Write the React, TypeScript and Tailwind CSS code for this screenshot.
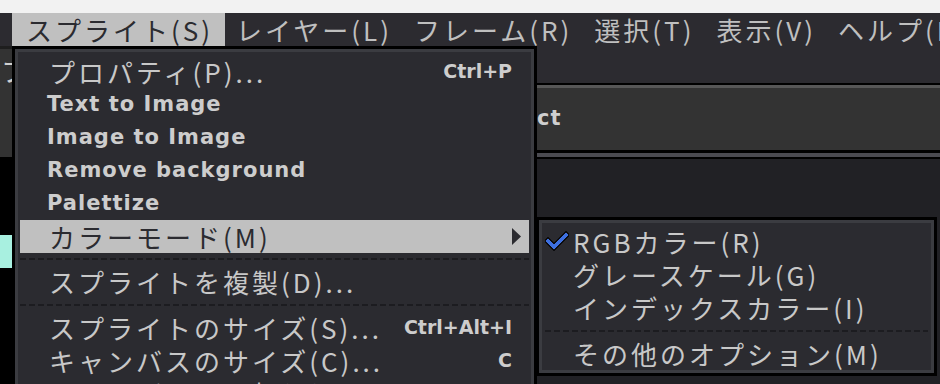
import React from 'react';

const jp = "font-['Noto_Sans_CJK_JP','Noto_Sans',sans-serif] text-[26px] tracking-[3px] leading-none";
const px = "font-['DejaVu_Sans',sans-serif] font-bold text-[21px] tracking-[1px] leading-none";
const dash = 'h-[2px] bg-[repeating-linear-gradient(90deg,#1c1c20_0_6px,transparent_6px_9px)]';

type Item = { label: string; pixel?: boolean; shortcut?: string; active?: boolean; sub?: boolean };

function Row({ label, pixel, shortcut, active, sub }: Item) {
  return (
    <div
      className={`flex h-[33px] items-center justify-between ${pixel ? 'pl-[27px]' : 'pl-[29px]'} ${
        sub ? 'pr-[8px]' : 'pr-[17px]'
      } ${active ? 'bg-[#c0c0c0] text-[#2b2b30]' : 'text-[#c8c8c8]'}`}
    >
      <span className={`whitespace-nowrap ${pixel ? `${px} text-[#cdcdcd]` : jp}`}>{label}</span>
      {shortcut && (
        <span className="whitespace-nowrap font-['DejaVu_Sans',sans-serif] text-[19px] font-bold leading-none text-[#cdcdcd]">
          {shortcut}
        </span>
      )}
      {sub && (
        <svg width="9" height="17" viewBox="0 0 9 17">
          <polygon points="0,0 9,8.5 0,17" fill="#2b2b30" />
        </svg>
      )}
    </div>
  );
}

function Check() {
  return (
    <svg width="24" height="20" viewBox="0 0 24 20" shapeRendering="crispEdges">
      <polyline points="3,10 9,16 21,4" fill="none" stroke="#0c0c0e" strokeWidth="7" strokeLinecap="square" />
      <polyline points="3,10 9,16 21,4" fill="none" stroke="#3d6fe0" strokeWidth="3" strokeLinecap="square" />
    </svg>
  );
}

export default function App() {
  const menus = ['スプライト(S)', 'レイヤー(L)', 'フレーム(R)', '選択(T)', '表示(V)', 'ヘルプ(H)'];

  return (
    <div className="relative h-[384px] w-[940px] overflow-hidden bg-black">
      {/* title strip */}
      <div className="h-[13px] bg-[#f2f2f2]" />

      {/* menubar */}
      <div className="flex h-[33px] items-center bg-[#2c2b30] pl-[12px]">
        {menus.map((m, i) => (
          <div
            key={m}
            className={`flex h-full items-center whitespace-nowrap px-[11px] ${
              i === 0 ? 'bg-[#c0c0c0] pl-[14px] pr-[12px] text-[#2b2b30]' : 'text-[#bfbfbf]'
            }`}
          >
            <span className={jp}>{m}</span>
          </div>
        ))}
      </div>

      {/* app body behind the menus */}
      <div className="flex h-[338px]">
        <div className="flex w-[12px] flex-col overflow-hidden">
          <div className="h-[3px] bg-[#1e1e1e]" />
          <div className="h-[108px] overflow-hidden bg-[#333333] pt-[9px] text-[#d0d0d0]">
            <span className={`${jp} pl-[1px]`}>フ</span>
          </div>
          <div className="h-[78px] bg-black" />
          <div className="h-[33px] bg-[#a8f0e0]" />
          <div className="flex-1 bg-black" />
        </div>
        <div className="w-[525px] bg-black" />
        <div className="flex flex-1 flex-col">
          <div className="h-[37px] bg-[#2c2b30]" />
          <div className="h-[2px] bg-black" />
          <div className="h-[3px] bg-[#575757]" />
          <div className="flex h-[62px] items-center bg-[#333333] pb-[1px] text-[#cfcfcf]">
            <span className={px}>ct</span>
          </div>
          <div className="h-[3px] bg-black" />
          <div className="h-[4px] bg-[#4a4a50]" />
          <div className="h-[2px] bg-black" />
          <div className="flex-1 bg-[#212125]" />
        </div>
      </div>

      {/* sprite dropdown */}
      <div className="absolute left-[12px] top-[46px] w-[525px] border-[3px] border-black">
        <div className="border-[3px] border-[#3b3c41] bg-[#2b2b30] px-[2px] pt-[3px] pb-[20px]">
          <Row label="プロパティ(P)..." shortcut="Ctrl+P" />
          <Row label="Text to Image" pixel />
          <Row label="Image to Image" pixel />
          <Row label="Remove background" pixel />
          <Row label="Palettize" pixel />
          <Row label="カラーモード(M)" active sub />
          <div className="flex h-[12px] items-center">
            <div className={`w-full ${dash}`} />
          </div>
          <Row label="スプライトを複製(D)..." />
          <div className="flex h-[13px] items-center">
            <div className={`w-full ${dash}`} />
          </div>
          <Row label="スプライトのサイズ(S)..." shortcut="Ctrl+Alt+I" />
          <Row label="キャンバスのサイズ(C)..." shortcut="C" />
          <Row label="キャンバスの回転(R)" />
        </div>
      </div>

      {/* color mode submenu */}
      <div className="absolute left-[536px] top-[217px] h-[159px] w-[401px] border-[3px] border-black">
        <div className="h-full border-[3px] border-[#3b3c41] bg-[#2b2b30] pt-[2px] text-[#c8c8c8]">
          <div className="relative flex h-[33px] items-center pl-[31px]">
            <div className="absolute left-[3px] top-[6px]">
              <Check />
            </div>
            <span className={`${jp} whitespace-nowrap`}>RGBカラー(R)</span>
          </div>
          <div className="flex h-[33px] items-center pl-[31px]">
            <span className={`${jp} whitespace-nowrap`}>グレースケール(G)</span>
          </div>
          <div className="flex h-[33px] items-center pl-[31px]">
            <span className={`${jp} whitespace-nowrap`}>インデックスカラー(I)</span>
          </div>
          <div className="flex h-[14px] items-center px-[3px]">
            <div className={`w-full ${dash}`} />
          </div>
          <div className="flex h-[31px] items-center pl-[31px]">
            <span className={`${jp} whitespace-nowrap`}>その他のオプション(M)</span>
          </div>
        </div>
      </div>
    </div>
  );
}
